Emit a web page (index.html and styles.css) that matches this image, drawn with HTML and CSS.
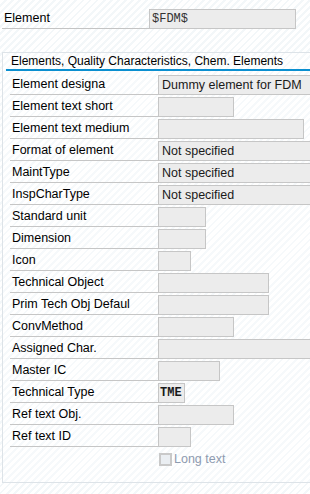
FILE: index.html
```html
<!DOCTYPE html>
<html>
<head>
<meta charset="utf-8">
<link rel="stylesheet" href="styles.css">
</head>
<body>
<div class="page">
  <div class="top-row">
    <div class="top-label">Element</div>
    <div class="field mono top-field">$FDM$</div>
  </div>
  <div class="panel">
    <div class="tab">Elements, Quality Characteristics, Chem. Elements</div>
    <div class="rows">
      <div class="row"><div class="label">Element designa</div><div class="field w-full">Dummy element for FDM</div></div>
      <div class="row"><div class="label">Element text short</div><div class="field w-76"></div></div>
      <div class="row"><div class="label">Element text medium</div><div class="field w-146"></div></div>
      <div class="row"><div class="label">Format of element</div><div class="field w-full">Not specified</div></div>
      <div class="row"><div class="label">MaintType</div><div class="field w-full">Not specified</div></div>
      <div class="row"><div class="label">InspCharType</div><div class="field w-full">Not specified</div></div>
      <div class="row"><div class="label">Standard unit</div><div class="field w-48"></div></div>
      <div class="row"><div class="label">Dimension</div><div class="field w-48"></div></div>
      <div class="row"><div class="label">Icon</div><div class="field w-33"></div></div>
      <div class="row"><div class="label">Technical Object</div><div class="field w-111"></div></div>
      <div class="row"><div class="label">Prim Tech Obj Defaul</div><div class="field w-111"></div></div>
      <div class="row"><div class="label">ConvMethod</div><div class="field w-76"></div></div>
      <div class="row"><div class="label">Assigned Char.</div><div class="field w-full"></div></div>
      <div class="row"><div class="label">Master IC</div><div class="field w-62"></div></div>
      <div class="row"><div class="label">Technical Type</div><div class="field mono bold w-27">TME</div></div>
      <div class="row"><div class="label">Ref text Obj.</div><div class="field w-76"></div></div>
      <div class="row"><div class="label">Ref text ID</div><div class="field w-33"></div></div>
      <div class="row check-row"><span class="checkbox"></span><span class="check-label">Long text</span></div>
    </div>
  </div>
</div>
</body>
</html>
```
FILE: styles.css
```css
html, body {
  margin: 0;
  padding: 0;
}
body {
  width: 310px;
  height: 494px;
  overflow: hidden;
  font-family: "Liberation Sans", Arial, sans-serif;
  font-size: 12px;
  color: #000;
  background: repeating-linear-gradient(135deg, #ffffff 0 3px, #f3f7f9 3px 5px);
}
.page {
  height: 494px;
  overflow: hidden;
}
.top-row {
  display: flex;
  height: 20px;
  padding-top: 9px;
  padding-left: 2px;
}
.top-label {
  flex-shrink: 0;
  width: 145px;
  padding-left: 2px;
  border-bottom: 1px solid #c4c4c4;
  line-height: 19px;
  font-size: 12.5px;
}
.field {
  flex-shrink: 0;
  box-sizing: border-box;
  height: 20px;
  border: 1px solid #c6c6c6;
  background: #ececec;
  padding-left: 3px;
  line-height: 18px;
  font-size: 12.5px;
  white-space: nowrap;
  overflow: hidden;
  color: #1a1a1a;
}
.top-field {
  width: 147px;
  color: #333;
}
.mono {
  font-family: "Liberation Mono", "Courier New", monospace;
  font-size: 12px;
  padding-left: 2px;
}
.bold {
  font-weight: bold;
  padding-left: 1px;
}
.panel {
  margin-top: 23px;
  margin-left: 2px;
  height: 431px;
  box-sizing: border-box;
  border: 1px solid #dde3e8;
  border-right: none;
  background: repeating-linear-gradient(135deg, #ffffff 0 3px, #f6f9fb 3px 5px);
}
.tab {
  margin-left: 3px;
  height: 16px;
  line-height: 16px;
  padding-left: 5px;
  border-bottom: 2px solid #0a8fd0;
  font-size: 12px;
  white-space: nowrap;
}
.rows {
  margin-top: 4px;
  padding-left: 7px;
  display: flex;
  flex-direction: column;
  gap: 2px;
}
.row {
  display: flex;
  height: 20px;
}
.label {
  flex-shrink: 0;
  width: 146px;
  padding-left: 2px;
  border-bottom: 1px solid #c6c6c6;
  line-height: 19px;
  font-size: 12.5px;
  white-space: nowrap;
  overflow: hidden;
}
.w-full { width: 155px; }
.w-146 { width: 146px; }
.w-111 { width: 111px; }
.w-76 { width: 76px; }
.w-62 { width: 62px; }
.w-48 { width: 48px; }
.w-33 { width: 33px; }
.w-27 { width: 27px; }
.check-row {
  padding-left: 149px;
  align-items: center;
  gap: 2px;
}
.checkbox {
  box-sizing: border-box;
  width: 13px;
  height: 13px;
  border: 2px solid #c9c9c9;
  background: #eaeef2;
}
.check-label {
  color: #8e9bb0;
  font-size: 12.5px;
}
```
